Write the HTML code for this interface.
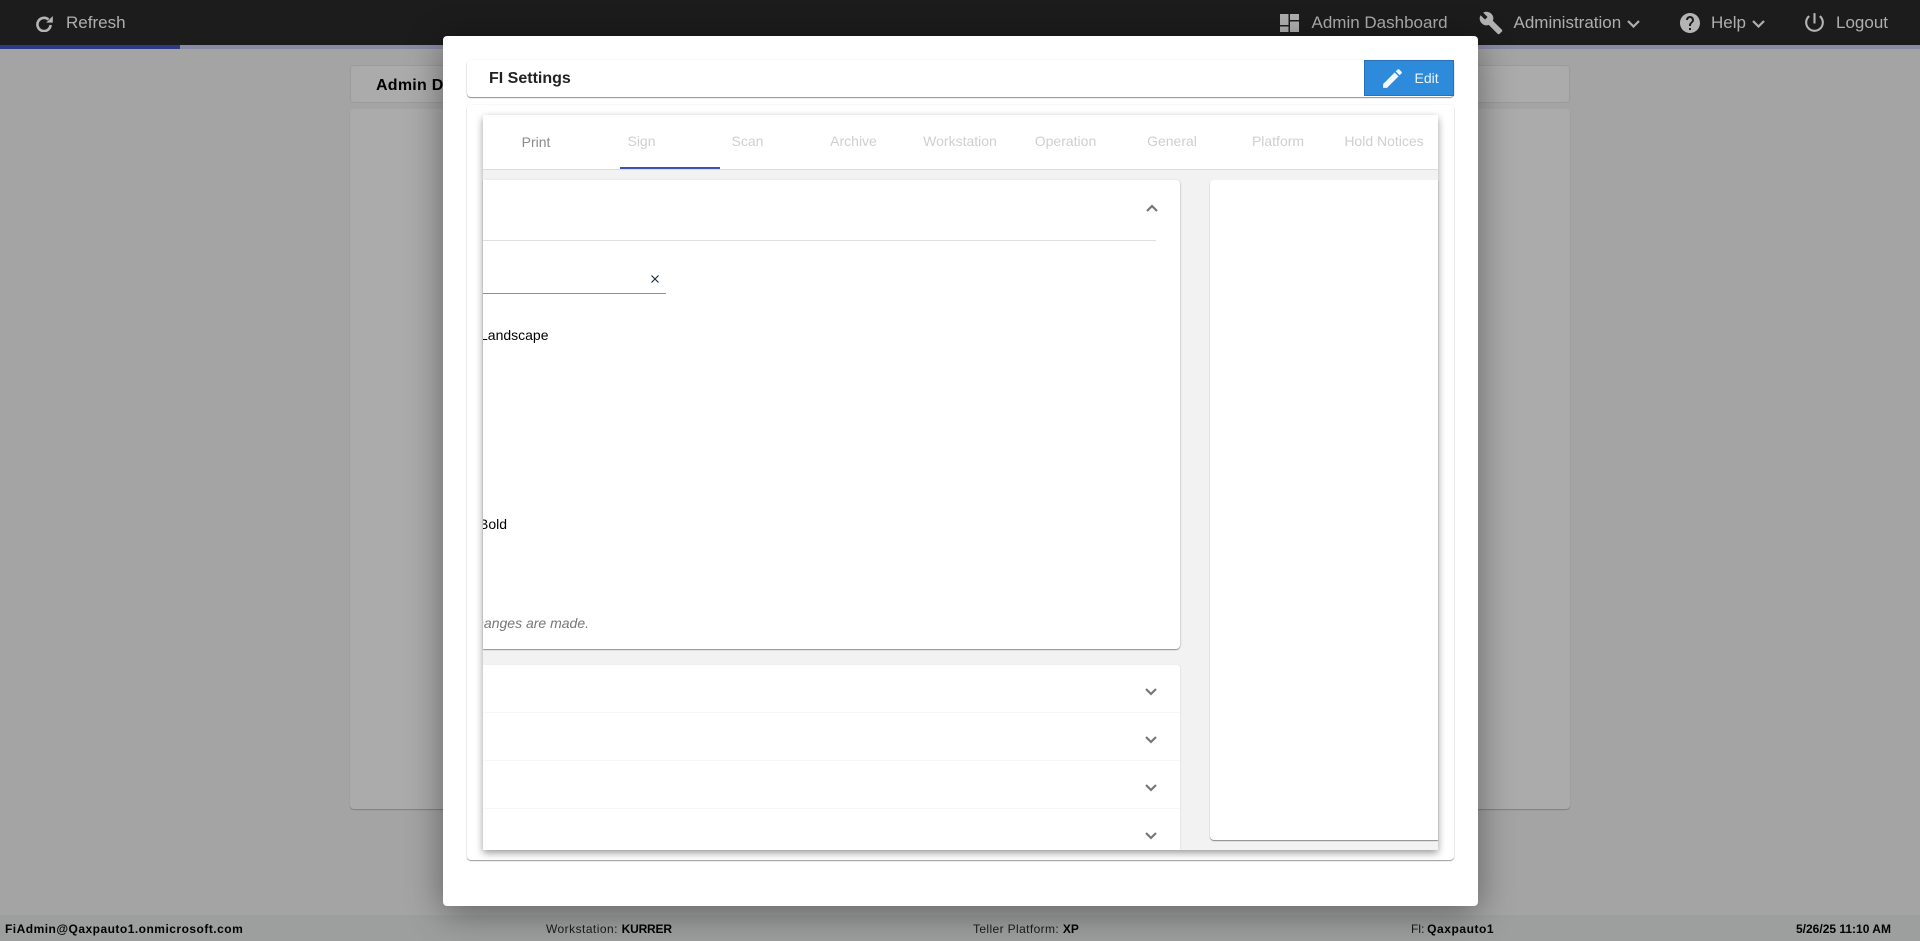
<!DOCTYPE html>
<html lang="en"><head><meta charset="utf-8"><title>FI Settings</title>
<style>
html,body{margin:0;padding:0;width:1920px;height:941px;overflow:hidden;background:#a4a4a4;font-family:"Liberation Sans",sans-serif}
div,svg{position:absolute;box-sizing:border-box}
.t{white-space:nowrap;line-height:20px;transform:translateY(-50%)}
.tc{white-space:nowrap;line-height:20px;transform:translate(-50%,-50%)}
.nav{font-size:17px;color:#aeaeae}
.tab{font-size:14px;color:#cfcfcf;top:141px}
.ft{font-size:12px;color:#1a1a1a;top:929px}
.ft b{color:#000}
.ft i{font-style:normal}
.ch{fill:none;stroke:#777;stroke-width:2.2}
.nc{fill:none;stroke:#aeaeae;stroke-width:2.2}
.div{left:483px;width:697px;height:1px;background:#f6f6f6}
</style></head><body>
<!-- dimmed page -->
<div style="left:350px;top:65px;width:1220px;height:38px;background:#ababab;border:1px solid #9b9b9b;border-radius:4px"></div>
<div class="t" style="left:376px;top:86px;font-size:16px;font-weight:bold;color:#000;letter-spacing:.25px">Admin Dashboard</div>
<div style="left:350px;top:109px;width:1220px;height:700px;background:#ababab;border-radius:4px;box-shadow:0 1px 1px #7f7f7f"></div>
<div style="left:0;top:915px;width:1920px;height:26px;background:#9d9e9e"></div>
<div class="t ft" style="left:5px"><b style="letter-spacing:.48px">FiAdmin@Qaxpauto1.onmicrosoft.com</b></div>
<div class="t ft" style="left:546px"><i style="letter-spacing:.45px">Workstation: </i><b style="letter-spacing:-.2px">KURRER</b></div>
<div class="t ft" style="left:973px"><i style="letter-spacing:.38px">Teller Platform: </i><b>XP</b></div>
<div class="t ft" style="left:1411px"><i style="letter-spacing:-.3px">FI: </i><b style="letter-spacing:.55px">Qaxpauto1</b></div>
<div class="t ft" style="left:1796px"><b>5/26/25 11:10 AM</b></div>
<!-- nav -->
<div style="left:0;top:0;width:1920px;height:45px;background:#1c1c1c"></div>
<div style="left:0;top:45px;width:1920px;height:4px;background:#898ba6"></div>
<div style="left:0;top:45px;width:180px;height:4px;background:#2d3a85"></div>
<svg style="left:36px;top:15px" width="17" height="17" viewBox="0 0 17 17"><path d="M12.5 4.6A6.6 6.6 0 1 0 14.6 10" fill="none" stroke="#b4b4b4" stroke-width="2.6"/><path d="M10.2 7.6h6.6V1z" fill="#b4b4b4"/></svg>
<div class="t nav" style="left:66px;top:23px">Refresh</div>
<svg style="left:1280px;top:14px" width="19" height="18" viewBox="0 0 19 18" fill="#b0b0b0"><path d="M0 0h8.5v11H0zM0 12.5h8.5V18H0zM10 0h9v6h-9zM10 7.5h9V18h-9z"/></svg>
<div class="t nav" style="left:1311.5px;top:23px">Admin Dashboard</div>
<svg style="left:1479px;top:10.5px" width="24" height="24" viewBox="0 0 24 24" fill="#b4b4b4" stroke="#b4b4b4" stroke-width=".6"><path d="M22.7 19l-9.1-9.1c.9-2.3.4-5-1.5-6.9-2-2-5-2.4-7.4-1.3L9 6 6 9 1.6 4.7C.4 7.1.9 10.1 2.9 12.1c1.9 1.9 4.6 2.4 6.9 1.5l9.1 9.1c.4.4 1 .4 1.4 0l2.3-2.3c.5-.4.5-1.1.1-1.4z"/></svg>
<div class="t nav" style="left:1513.5px;top:23px">Administration</div>
<svg class="nc" style="left:1627px;top:19.5px" width="13" height="8" viewBox="0 0 13 8"><path d="M1 1l5.5 5.5L12 1"/></svg>
<svg style="left:1678px;top:11px" width="24" height="24" viewBox="0 0 24 24" fill="#b4b4b4"><path d="M12 2C6.48 2 2 6.48 2 12s4.48 10 10 10 10-4.48 10-10S17.52 2 12 2zm1 17h-2v-2h2v2zm2.07-7.75l-.9.92C13.45 12.9 13 13.5 13 15h-2v-.5c0-1.1.45-2.1 1.17-2.83l1.24-1.26c.37-.36.59-.86.59-1.41 0-1.1-.9-2-2-2s-2 .9-2 2H8c0-2.21 1.79-4 4-4s4 1.79 4 4c0 .88-.36 1.68-.93 2.25z"/></svg>
<div class="t nav" style="left:1711px;top:23px">Help</div>
<svg class="nc" style="left:1752px;top:19.5px" width="13" height="8" viewBox="0 0 13 8"><path d="M1 1l5.5 5.5L12 1"/></svg>
<svg style="left:1802px;top:10px" width="25" height="25" viewBox="0 0 24 24" fill="#b4b4b4"><path d="M13 3h-2v10h2V3zm4.83 2.17l-1.42 1.42C17.99 7.86 19 9.81 19 12c0 3.87-3.13 7-7 7s-7-3.13-7-7c0-2.19 1.01-4.14 2.58-5.42L6.17 5.17C4.23 6.82 3 9.26 3 12c0 4.97 4.03 9 9 9s9-4.03 9-9c0-2.74-1.23-5.18-3.17-6.83z"/></svg>
<div class="t nav" style="left:1836px;top:23px">Logout</div>
<!-- modal -->
<div style="left:443px;top:36px;width:1035px;height:870px;background:#fff;border-radius:4px;box-shadow:0 6px 36px rgba(0,0,0,.42)"></div>
<div style="left:467px;top:60px;width:987px;height:37px;background:#fff;border-radius:4px;box-shadow:0 1px 1px #8d8d8d,0 0 2px rgba(0,0,0,.08)"></div>
<div class="t" style="left:489px;top:78.5px;font-size:16px;font-weight:bold;color:#222">FI Settings</div>
<div style="left:1364px;top:60px;width:90px;height:36px;background:#2e8bdc;border:1px solid #2a72b8"></div>
<svg style="left:1380px;top:66px" width="25" height="25" viewBox="0 0 24 24" fill="#f4f8fc"><path d="M3 17.25V21h3.75L17.81 9.94l-3.75-3.75L3 17.25zM20.71 7.04c.39-.39.39-1.02 0-1.41l-2.34-2.34c-.39-.39-1.02-.39-1.41 0l-1.83 1.83 3.75 3.75 1.83-1.83z"/></svg>
<div class="t" style="left:1414.5px;top:78px;font-size:14px;color:#eaf3fb">Edit</div>
<div style="left:467px;top:105px;width:987px;height:755px;background:#fff;border-radius:4px;box-shadow:0 1px 1px #9a9a9a,0 0 2px rgba(0,0,0,.08)"></div>
<!-- panel -->
<div style="left:483px;top:115px;width:955px;height:735px;background:#f2f2f2;box-shadow:0 3px 8px rgba(0,0,0,.4);border-radius:2px 2px 0 0"></div>
<div style="left:483px;top:115px;width:955px;height:54px;background:#fff;border-radius:2px 2px 0 0"></div>
<div style="left:483px;top:169px;width:955px;height:1px;background:#dcdcdc"></div>
<div class="tc tab" style="left:536px;top:142px;color:#8a8a8a">Print</div>
<div class="tc tab" style="left:641.5px">Sign</div>
<div class="tc tab" style="left:747.5px">Scan</div>
<div class="tc tab" style="left:853.5px">Archive</div>
<div class="tc tab" style="left:960px">Workstation</div>
<div class="tc tab" style="left:1065.5px">Operation</div>
<div class="tc tab" style="left:1172px">General</div>
<div class="tc tab" style="left:1278px">Platform</div>
<div class="tc tab" style="left:1384px">Hold Notices</div>
<div style="left:620px;top:167px;width:100px;height:2px;background:#3f51b5"></div>
<!-- cards -->
<div style="left:483px;top:180px;width:697px;height:469px;background:#fff;border-radius:0 4px 4px 0;box-shadow:0 1px 1px rgba(0,0,0,.4),1px 0 2px rgba(0,0,0,.08)"></div>
<div style="left:483px;top:240px;width:673px;height:1px;background:#e0e0e0"></div>
<svg class="ch" style="left:1146px;top:204px" width="12" height="8" viewBox="0 0 12 8"><path d="M1 7l5-5 5 5"/></svg>
<div style="left:483px;top:293px;width:183px;height:1px;background:#8f8f8f"></div>
<svg style="left:651px;top:275px" width="8" height="8" viewBox="0 0 8 8" fill="none" stroke="#12283a" stroke-width="1.1"><path d="M.5.5l7 7M7.5.5l-7 7"/></svg>
<div style="left:483px;top:320px;width:200px;height:30px;overflow:hidden"><div class="t" style="left:-3px;top:15px;font-size:14px;color:#000">Landscape</div></div>
<div style="left:483px;top:510px;width:200px;height:30px;overflow:hidden"><div class="t" style="left:-4px;top:13.5px;font-size:14px;color:#000">Bold</div></div>
<div style="left:483px;top:610px;width:200px;height:26px;overflow:hidden"><div class="t" style="right:94px;top:13px;font-size:14px;font-style:italic;color:#777">changes are made.</div></div>
<div style="left:483px;top:665px;width:697px;height:185px;background:#fff;border-radius:0 3px 0 0;box-shadow:1px 0 1px rgba(0,0,0,.05)"></div>
<div class="div" style="top:712px"></div><div class="div" style="top:760px"></div><div class="div" style="top:808px"></div>
<svg class="ch" style="left:1145px;top:688px" width="12" height="8" viewBox="0 0 12 8"><path d="M1 1l5 5 5-5"/></svg>
<svg class="ch" style="left:1145px;top:736px" width="12" height="8" viewBox="0 0 12 8"><path d="M1 1l5 5 5-5"/></svg>
<svg class="ch" style="left:1145px;top:784px" width="12" height="8" viewBox="0 0 12 8"><path d="M1 1l5 5 5-5"/></svg>
<svg class="ch" style="left:1145px;top:832px" width="12" height="8" viewBox="0 0 12 8"><path d="M1 1l5 5 5-5"/></svg>
<div style="left:1210px;top:180px;width:228px;height:660px;background:#fff;border-radius:4px 0 0 4px;box-shadow:0 1px 1px rgba(0,0,0,.45)"></div>
</body></html>
